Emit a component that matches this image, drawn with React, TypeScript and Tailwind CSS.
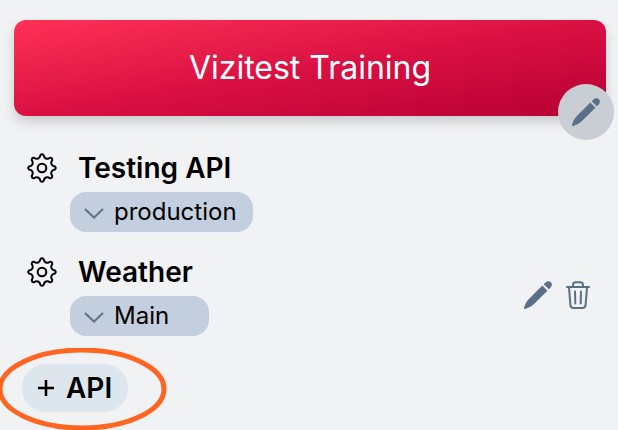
const TOOTH_ANGLES = [0, 45, 90, 135, 180, 225, 270, 315];

function point(radius: number, degrees: number) {
  const radians = (degrees * Math.PI) / 180;
  return `${(15 + radius * Math.sin(radians)).toFixed(2)} ${(15 - radius * Math.cos(radians)).toFixed(2)}`;
}

/* Eight rounded teeth joined by shallow hollows. */
const GEAR_OUTLINE =
  TOOTH_ANGLES.map((angle, index) => {
    const start = index === 0 ? `M${point(13, angle - 7)}` : "";
    return `${start} Q${point(14.6, angle)} ${point(13, angle + 7)} C${point(9.6, angle + 13)} ${point(9.6, angle + 32)} ${point(13, angle + 38)}`;
  }).join(" ") + " Z";

function Gear() {
  return (
    <svg
      viewBox="0 0 30 30"
      className="size-[30px] fill-none stroke-black stroke-2"
      strokeLinejoin="round"
      aria-hidden="true"
    >
      <path d={GEAR_OUTLINE} />
      <circle cx="15" cy="15" r="4.3" />
    </svg>
  );
}

function Pencil() {
  return (
    <svg viewBox="0 0 28 28" className="size-7 fill-[#5a6f88]" aria-hidden="true">
      <path d="M18.3 4.6 L23.4 9.7 L10 23.1 C7.4 25.600 4.200 27.200 1.200 27.900 C.3 28.100 -.1 27.700 .1 26.800 C.8 23.800 2.400 20.600 4.900 18 Z" />
      <path d="M19.700 3.200 L21.700 1.300 C23.400 -.200 25.600 0 26.900 1.300 C28.200 2.600 28.300 4.700 26.800 6.300 L24.800 8.300 Z" />
    </svg>
  );
}

function Trash() {
  return (
    <svg
      viewBox="0 0 24 28"
      className="h-7 w-6 fill-none stroke-[#5a6f88] stroke-2"
      strokeLinecap="round"
      strokeLinejoin="round"
      aria-hidden="true"
    >
      <path d="M1 6 H23" />
      <path d="M7 5.500 V4 Q7 1.200 9.700 1.200 H14.300 Q17 1.200 17 4 V5.500" />
      <path d="M3 6.500 L4.400 23.800 Q4.700 27 7.700 27 H16.300 Q19.300 27 19.600 23.800 L21 6.500" />
      <path d="M9 10.500 L9.300 22.500 M15 10.500 L14.700 22.500" />
    </svg>
  );
}

function Api({
  name,
  environment,
  editable = false,
}: {
  name: string;
  environment: string;
  editable?: boolean;
}) {
  return (
    <li className="flex items-center justify-between pr-4">
      <div>
        <div className="flex h-10 items-center gap-[21px] pl-[13px]">
          <button type="button" aria-label={`${name} settings`} className="shrink-0">
            <Gear />
          </button>
          <h2 className="text-[28px] leading-8 font-semibold">{name}</h2>
        </div>
        <div className="relative mt-1 ml-14 h-10 w-fit">
          <select
            aria-label={`${name} environment`}
            className="block h-10 min-w-[139px] appearance-none rounded-2xl bg-[#c3cfde] pr-4 pl-11 text-2xl"
          >
            <option>{environment}</option>
          </select>
          <svg
            viewBox="0 0 20 11"
            className="pointer-events-none absolute top-4 left-[14px] h-[11px] w-5 fill-none stroke-[#68717d] stroke-2"
            aria-hidden="true"
          >
            <path d="M1 1 L10 9.500 L19 1" />
          </svg>
        </div>
      </div>
      {editable && (
        <div className="flex gap-[14px] pt-[2px]">
          <button type="button" aria-label={`Edit ${name}`}>
            <Pencil />
          </button>
          <button type="button" aria-label={`Delete ${name}`}>
            <Trash />
          </button>
        </div>
      )}
    </li>
  );
}

export default function App() {
  return (
    <main className="min-h-screen overflow-hidden bg-[#f0f2f4] px-3 pt-5 pl-[14px] font-['Inter',sans-serif] text-black">
      <header className="relative flex h-24 items-center justify-center rounded-xl bg-linear-to-br from-[#ff3056] via-[#da1043] to-[#b70034] shadow-[0_6px_12px_rgba(0,0,0,0.16)]">
        <h1 className="text-[32px] leading-10 text-white">Vizitest Training</h1>
        <button
          type="button"
          aria-label="Edit project"
          className="absolute -right-2 -bottom-6 flex size-14 items-center justify-center rounded-full bg-[#c9ced5]"
        >
          <Pencil />
        </button>
      </header>
      <ul className="flex flex-col gap-5 pt-8">
        <Api name="Testing API" environment="production" />
        <Api name="Weather" environment="Main" editable />
      </ul>
      <div className="relative mt-7 ml-2 w-fit">
        <button
          type="button"
          className="flex h-12 items-center gap-3 rounded-full bg-[#dde5ed] px-4 text-[28px] font-semibold"
        >
          <svg viewBox="0 0 16 16" className="size-4 fill-none stroke-black stroke-[2.5]" aria-hidden="true">
            <path d="M0 8 H16 M8 0 V16" />
          </svg>
          API
        </button>
        <svg
          viewBox="0 0 170 84"
          className="pointer-events-none absolute -top-4 -left-[25px] h-[84px] w-[170px] fill-none stroke-[#ff6420] stroke-[5]"
          aria-hidden="true"
        >
          <ellipse cx="85" cy="41" rx="82" ry="39" />
        </svg>
      </div>
    </main>
  );
}
